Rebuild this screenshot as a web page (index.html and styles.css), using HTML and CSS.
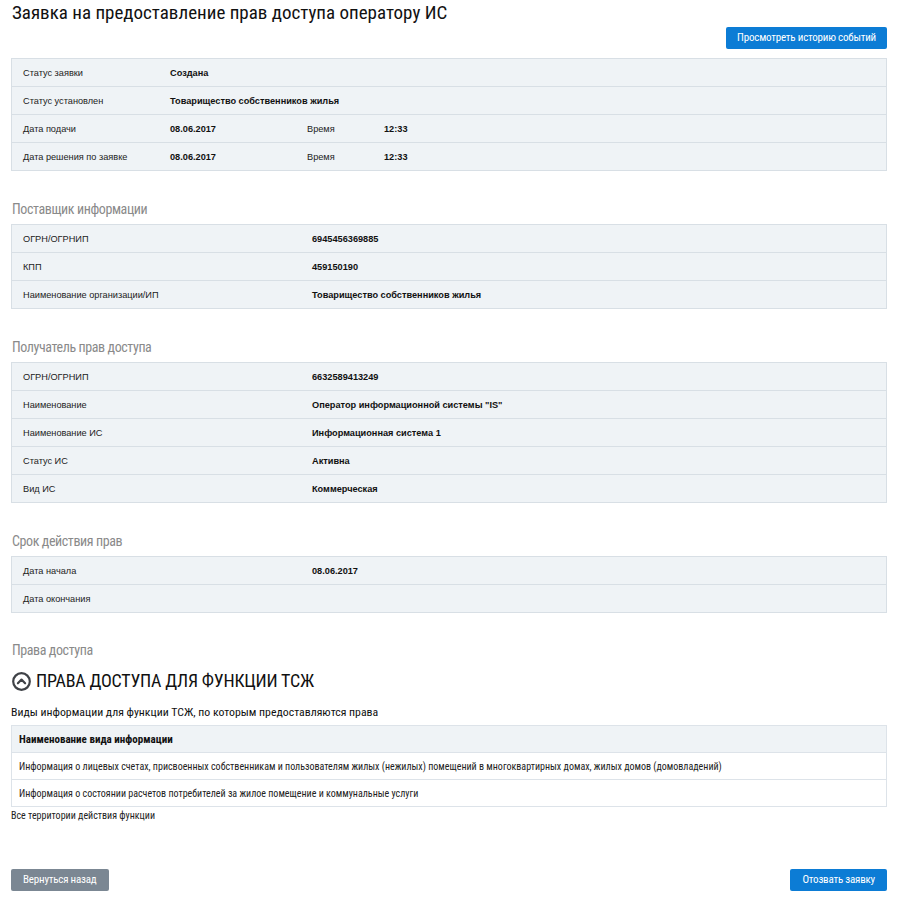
FILE: index.html
```html
<!DOCTYPE html>
<html lang="ru">
<head>
<meta charset="utf-8">
<title>Заявка на предоставление прав доступа оператору ИС</title>
<link rel="stylesheet" href="styles.css">
</head>
<body>
<div class="page">
  <h1 class="page-title">Заявка на предоставление прав доступа оператору ИС</h1>

  <div class="toolbar">
    <button class="btn btn-primary" type="button">Просмотреть историю событий</button>
  </div>

  <div class="info-table">
    <div class="info-row">
      <span class="cell label">Статус заявки</span>
      <span class="cell value">Создана</span>
    </div>
    <div class="info-row">
      <span class="cell label">Статус установлен</span>
      <span class="cell value">Товарищество собственников жилья</span>
    </div>
    <div class="info-row">
      <span class="cell label">Дата подачи</span>
      <span class="cell value date">08.06.2017</span>
      <span class="cell label time-label">Время</span>
      <span class="cell value">12:33</span>
    </div>
    <div class="info-row">
      <span class="cell label">Дата решения по заявке</span>
      <span class="cell value date">08.06.2017</span>
      <span class="cell label time-label">Время</span>
      <span class="cell value">12:33</span>
    </div>
  </div>

  <h2 class="section-title">Поставщик информации</h2>
  <div class="info-table wide">
    <div class="info-row">
      <span class="cell label">ОГРН/ОГРНИП</span>
      <span class="cell value">6945456369885</span>
    </div>
    <div class="info-row">
      <span class="cell label">КПП</span>
      <span class="cell value">459150190</span>
    </div>
    <div class="info-row">
      <span class="cell label">Наименование организации/ИП</span>
      <span class="cell value">Товарищество собственников жилья</span>
    </div>
  </div>

  <h2 class="section-title">Получатель прав доступа</h2>
  <div class="info-table wide">
    <div class="info-row">
      <span class="cell label">ОГРН/ОГРНИП</span>
      <span class="cell value">6632589413249</span>
    </div>
    <div class="info-row">
      <span class="cell label">Наименование</span>
      <span class="cell value">Оператор информационной системы "IS"</span>
    </div>
    <div class="info-row">
      <span class="cell label">Наименование ИС</span>
      <span class="cell value">Информационная система 1</span>
    </div>
    <div class="info-row">
      <span class="cell label">Статус ИС</span>
      <span class="cell value">Активна</span>
    </div>
    <div class="info-row">
      <span class="cell label">Вид ИС</span>
      <span class="cell value">Коммерческая</span>
    </div>
  </div>

  <h2 class="section-title">Срок действия прав</h2>
  <div class="info-table wide">
    <div class="info-row">
      <span class="cell label">Дата начала</span>
      <span class="cell value">08.06.2017</span>
    </div>
    <div class="info-row">
      <span class="cell label">Дата окончания</span>
      <span class="cell value"></span>
    </div>
  </div>

  <h2 class="section-title rights-title">Права доступа</h2>
  <div class="group-title">
    <svg class="collapse-icon" width="19" height="19" viewBox="0 0 19 19" aria-hidden="true">
      <circle cx="9.5" cy="9.5" r="8.3" fill="none" stroke="#3f4247" stroke-width="2.2"/>
      <path d="M5.9 11.3 L9.5 7.6 L13.1 11.3" fill="none" stroke="#3f4247" stroke-width="2.2" stroke-linecap="round" stroke-linejoin="round"/>
    </svg>
    <span>ПРАВА ДОСТУПА ДЛЯ ФУНКЦИИ ТСЖ</span>
  </div>
  <p class="group-caption">Виды информации для функции ТСЖ, по которым предоставляются права</p>

  <table class="kinds-table">
    <thead>
      <tr><th>Наименование вида информации</th></tr>
    </thead>
    <tbody>
      <tr><td>Информация о лицевых счетах, присвоенных собственникам и пользователям жилых (нежилых) помещений в многоквартирных домах, жилых домов (домовладений)</td></tr>
      <tr><td>Информация о состоянии расчетов потребителей за жилое помещение и коммунальные услуги</td></tr>
    </tbody>
  </table>
  <p class="territory-note">Все территории действия функции</p>

  <div class="footer-actions">
    <button class="btn btn-secondary" type="button">Вернуться назад</button>
    <button class="btn btn-primary" type="button">Отозвать заявку</button>
  </div>
</div>
</body>
</html>
```

FILE: styles.css
```css
html, body {
  margin: 0;
  padding: 0;
  background: #ffffff;
}

body {
  font-family: "Liberation Sans", Arial, sans-serif;
  color: #1a1a1a;
}

.page {
  padding: 1px 23px 8px 11px;
}

.page-title {
  margin: 0 0 2px 1px;
  font-family: "Roboto Condensed", "Liberation Sans Narrow", "DejaVu Sans Condensed", Roboto, sans-serif;
  font-weight: 400;
  font-size: 19px;
  line-height: 24px;
  color: #111111;
}

.toolbar {
  display: flex;
  justify-content: flex-end;
  margin-bottom: 9px;
}

.btn {
  height: 22px;
  padding: 0 12px;
  border: 0;
  border-radius: 2px;
  color: #ffffff;
  font-family: "Roboto Condensed", "Liberation Sans Narrow", "DejaVu Sans Condensed", Roboto, sans-serif;
  font-size: 11px;
  letter-spacing: -0.2px;
  line-height: 22px;
  cursor: pointer;
}

.toolbar .btn {
  padding: 0 11px;
}

.btn-primary {
  background: #0c7cd5;
}

.btn-secondary {
  background: #7b8793;
}

/* key/value blocks */
.info-table {
  border: 1px solid #d8dfe5;
  background: #eff3f6;
}

.info-row {
  display: flex;
  align-items: center;
  height: 27px;
  border-top: 1px solid #d8dfe5;
  font-size: 9.2px;
}

.info-row:first-child {
  border-top: 0;
}

.cell {
  white-space: nowrap;
}

.label {
  flex: 0 0 147px;
  padding-left: 11px;
  color: #222222;
}

.value {
  font-weight: 700;
  color: #111111;
}

.info-table .date {
  flex: 0 0 137px;
}

.info-table .time-label {
  flex: 0 0 77px;
  padding-left: 0;
}

.wide .label {
  flex-basis: 289px;
}

.section-title {
  margin: 28px 0 5px 1px;
  font-family: "Roboto Condensed", "Liberation Sans Narrow", "DejaVu Sans Condensed", Roboto, sans-serif;
  font-weight: 400;
  font-size: 14px;
  letter-spacing: -0.4px;
  line-height: 20px;
  color: #8a8a8a;
}

.rights-title {
  margin-top: 27px;
}

.group-title {
  display: flex;
  align-items: center;
  gap: 5px;
  margin: 9px 0 0 1px;
  font-family: "Roboto Condensed", "Liberation Sans Narrow", "DejaVu Sans Condensed", Roboto, sans-serif;
  font-size: 18px;
  letter-spacing: -0.2px;
  line-height: 24px;
  color: #111111;
}

.collapse-icon {
  flex: none;
}

.group-caption {
  margin: 11px 0 5px 0;
  font-family: "Roboto Condensed", "Liberation Sans Narrow", "DejaVu Sans Condensed", Roboto, sans-serif;
  font-size: 11.8px;
  line-height: 16px;
  color: #111111;
}

.kinds-table {
  width: 100%;
  border-collapse: collapse;
  font-family: "Roboto Condensed", "Liberation Sans Narrow", "DejaVu Sans Condensed", Roboto, sans-serif;
  font-size: 10px;
}

.kinds-table th,
.kinds-table td {
  height: 26px;
  padding: 0 7px;
  border: 1px solid #dde3e9;
  text-align: left;
  color: #222222;
}

.kinds-table th {
  background: #eff3f6;
  font-weight: 700;
  font-size: 11px;
  color: #111111;
}

.kinds-table td {
  background: #ffffff;
}

.territory-note {
  margin: 2px 0 0 0;
  font-family: "Roboto Condensed", "Liberation Sans Narrow", "DejaVu Sans Condensed", Roboto, sans-serif;
  font-size: 10px;
  line-height: 14px;
  color: #222222;
}

.footer-actions {
  display: flex;
  justify-content: space-between;
  margin-top: 46px;
}
```
